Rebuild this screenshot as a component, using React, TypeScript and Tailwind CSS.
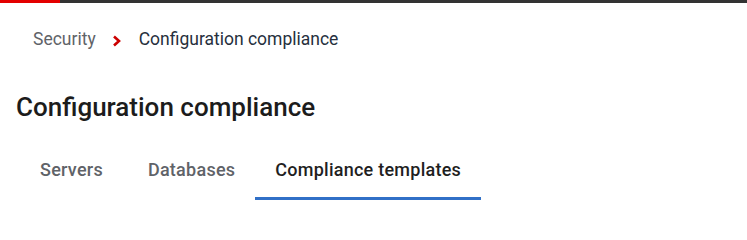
export default function App() {
  const tabs = [
    { label: "Servers", cls: "mr-[5px]" },
    { label: "Databases", cls: "" },
    { label: "Compliance templates", cls: "" },
  ];
  const active = 2;
  return (
    <div className="w-[747px] h-[216px] bg-white font-['Roboto',sans-serif] overflow-hidden">
      {/* top accent bar */}
      <div className="flex h-[3px]">
        <div className="w-[60px] bg-[#e30000]" />
        <div className="flex-1 bg-[#333333]" />
      </div>

      {/* breadcrumb */}
      <nav className="flex items-center h-[74px] pl-[33px] pb-[1px] text-[17.5px]">
        <span className="text-[#5f6368]">Security</span>
        <svg width="10" height="12" viewBox="0 0 10 12" className="ml-[16px] mr-[17px] mt-[2px]">
          <path d="M2 1.5 L7 6 L2 10.5" fill="none" stroke="#cc0000" strokeWidth="2.6" />
        </svg>
        <span className="text-[#26303d]">Configuration compliance</span>
      </nav>

      {/* title */}
      <h1 className="mt-[15px] pl-[16px] text-[26px] leading-[30px] font-medium text-[#1c1c1c]">
        Configuration compliance
      </h1>

      {/* tabs */}
      <div className="flex pl-[20px] mt-[24px]">
        {tabs.map((t, i) => (
          <div
            key={t.label}
            className={`${t.cls} px-[20px] pt-[13px] pb-[16px] leading-[22px] text-[18px] tracking-[0.25px] font-medium border-b-[3px] ${
              i === active ? "text-[#1f1f1f] border-[#3170c7]" : "text-[#5f6368] border-transparent"
            }`}
          >
            {t.label}
          </div>
        ))}
      </div>
    </div>
  );
}
